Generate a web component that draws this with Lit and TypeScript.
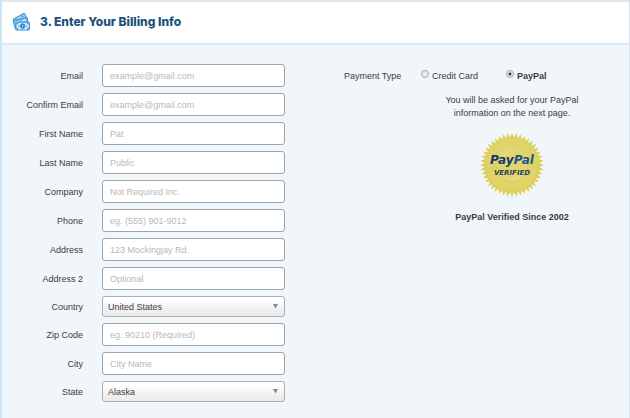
import { LitElement, html, svg, css } from "lit";
import { customElement, state } from "lit/decorators.js";

interface Field {
  id: string;
  label: string;
  placeholder?: string;
  type?: string;
  options?: string[];
}

const FIELDS: Field[] = [
  { id: "email", label: "Email", placeholder: "example@gmail.com", type: "email" },
  { id: "confirm", label: "Confirm Email", placeholder: "example@gmail.com", type: "email" },
  { id: "first", label: "First Name", placeholder: "Pat" },
  { id: "last", label: "Last Name", placeholder: "Public" },
  { id: "company", label: "Company", placeholder: "Not Required Inc." },
  { id: "phone", label: "Phone", placeholder: "eg. (555) 901-9012", type: "tel" },
  { id: "address", label: "Address", placeholder: "123 Mockingjay Rd." },
  { id: "address2", label: "Address 2", placeholder: "Optional" },
  { id: "country", label: "Country", options: ["United States"] },
  { id: "zip", label: "Zip Code", placeholder: "eg. 90210 (Required)" },
  { id: "city", label: "City", placeholder: "City Name" },
  { id: "state", label: "State", options: ["Alaska"] },
];

// Outline of the serrated seal: alternating outer and inner radii.
const TEETH = 44;
const sealPoints = Array.from({ length: TEETH * 2 }, (_, i) => {
  const r = i % 2 ? 27.2 : 32;
  const a = (Math.PI * i) / TEETH;
  return `${(32 + r * Math.sin(a)).toFixed(2)},${(32 - r * Math.cos(a)).toFixed(2)}`;
}).join(" ");

@customElement("verified-seal")
export class VerifiedSeal extends LitElement {
  static styles = css`
    :host { display: block; }
    .seal { display: block; width: 64px; height: 64px; }
    .brand { font: italic 700 12px "DejaVu Sans", sans-serif; }
    .dark { fill: #14386b; }
    .light { fill: #1c5590; }
    .word { font: italic 700 7px "DejaVu Sans", sans-serif; fill: #2b4257; }
  `;

  render() {
    return html`<svg class="seal" viewBox="0 0 64 64" role="img" aria-label="PayPal Verified">
      ${svg`
        <defs>
          <linearGradient id="disc" x1="0" y1="0" x2="0.6" y2="1">
            <stop offset="0" stop-color="#e9df86" />
            <stop offset="0.5" stop-color="#dfd368" />
            <stop offset="1" stop-color="#e6db7c" />
          </linearGradient>
        </defs>
        <polygon points=${sealPoints} fill="#decf5a" />
        <circle cx="32" cy="32" r="26" fill="#e0d468" />
        <circle cx="32" cy="33" r="16" fill="url(#disc)" stroke="#d6c95c" stroke-width="0.8" />
        <path d="M20 22A16 16 0 0 1 44 22" fill="none" stroke="#ece392" stroke-width="1" />
        <text class="brand" x="32" y="31" text-anchor="middle"><tspan class="dark">Pay</tspan><tspan class="light">Pal</tspan></text>
        <text class="word" x="32" y="42" text-anchor="middle">VERIFIED</text>
      `}
    </svg>`;
  }
}

@customElement("app-root")
export class AppRoot extends LitElement {
  @state() private payment = "paypal";

  static styles = css`
    :host {
      display: block;
      box-sizing: border-box;
      min-height: 100vh;
      border-left: 2px solid #cbe5f5;
      border-right: 1px solid #d3e6f2;
      background: #f0f6fa;
      color: #3d3d3d;
      font: 9px/13px "Liberation Sans", Arial, sans-serif;
    }
    * { box-sizing: border-box; }
    .head {
      display: flex;
      align-items: center;
      gap: 10px;
      height: 45px;
      padding: 0 10px 2px;
      border-top: 2px solid #dce9f3;
      border-bottom: 2px solid #dce8f2;
      background: #fff;
    }
    .icon { width: 18px; height: 18px; }
    .title {
      margin: 0;
      color: #1a527c;
      font: 800 12px/16px Inter, sans-serif;
    }
    .form {
      display: grid;
      grid-template-columns: 1fr 1fr;
      gap: 59px;
      padding: 19px 26px 12px 24px;
    }
    .fields { display: flex; flex-direction: column; gap: 6px; }
    .row {
      display: grid;
      grid-template-columns: 57px 1fr;
      column-gap: 19px;
      align-items: center;
    }
    .label { padding-top: 2px; text-align: right; white-space: nowrap; }
    .input, .select {
      display: block;
      width: 100%;
      margin: 0;
      border: 1px solid #9aa4ab;
      border-radius: 3px;
      color: #3d3d3d;
      font: inherit;
      outline: none;
    }
    .input { height: 23px; padding: 0 7px; background: #fff; }
    .input::placeholder { color: #b8b8b8; opacity: 1; }
    .pick { position: relative; }
    .select {
      height: 21px;
      padding: 2px 20px 0 5px;
      border-color: #aaafb3;
      background: linear-gradient(#fff 20%, #f4f4f4 50%, #ebebeb);
      appearance: none;
    }
    .arrow {
      position: absolute;
      top: 8px;
      right: 7px;
      width: 5px;
      height: 5px;
      pointer-events: none;
    }
    .payment {
      display: grid;
      grid-template-columns: 58px 1fr;
      column-gap: 19px;
      align-content: start;
      padding-top: 6px;
    }
    .choices { display: flex; gap: 28px; }
    .choice { display: flex; gap: 3px; white-space: nowrap; }
    .chosen { font-weight: 700; }
    .radio {
      width: 8px;
      height: 8px;
      margin: 0;
      border: 1px solid #a3a6a8;
      border-radius: 50%;
      background: #e9eaeb;
      appearance: none;
    }
    .radio:checked { background: radial-gradient(circle, #444 0 1px, #e9eaeb 2px); }
    .notice {
      grid-column: 2;
      display: flex;
      flex-direction: column;
      align-items: center;
      padding-top: 11px;
      text-align: center;
    }
    .text { max-width: 150px; margin: 0 0 13px; }
    .since { margin: 14px 0 0; font-weight: 700; white-space: nowrap; }
  `;

  private control(f: Field) {
    return f.options
      ? html`<div class="pick">
          <select class="select" id=${f.id}>${f.options.map((o) => html`<option>${o}</option>`)}</select>
          <svg class="arrow" viewBox="0 0 5 5" aria-hidden="true"><path d="M0 0H5L2.5 4.5Z" fill="#888" /></svg>
        </div>`
      : html`<input class="input" id=${f.id} type=${f.type ?? "text"} placeholder=${f.placeholder ?? ""} />`;
  }

  private choice(value: string, text: string) {
    const on = this.payment === value;
    return html`<label class="choice ${on ? "chosen" : ""}">
      <input class="radio" type="radio" name="payment" .value=${value} .checked=${on}
        @change=${() => (this.payment = value)} />${text}
    </label>`;
  }

  render() {
    return html`
      <header class="head">
        <svg class="icon" viewBox="0 0 18 18" aria-hidden="true">
          <g stroke="#3a93d6" stroke-width="1">
            <g transform="rotate(-29 8 6)">
              <rect x="1.5" y="3" width="13" height="7" rx="0.6" fill="#a5d2ef" />
              <path d="M3.5 5h2M10.5 5h2M3.5 7.5h8" />
            </g>
            <g transform="rotate(-15 9 9)">
              <rect x="1.8" y="6" width="14" height="8" rx="0.6" fill="#7abce6" />
              <path d="M3.5 8h3M11 8h3M4 10.5h3" stroke="#fff" />
            </g>
            <rect x="3.8" y="9.2" width="13.6" height="7.8" rx="0.6" fill="#d2e8f6" />
            <path d="M4 11h1.5V9.3M17.2 11h-1.5V9.3M4 15.2h1.5V17M17.2 15.2h-1.5V17" fill="none" />
            <circle cx="10.6" cy="13.1" r="2.3" fill="#2c83c3" />
            <path d="M10.6 11.8v2.6" stroke="#9fd0ee" />
            <path d="M6.3 13.1h1.2M13.7 13.1h1.2" />
          </g>
        </svg>
        <h1 class="title">3. Enter Your Billing Info</h1>
      </header>
      <form class="form" @submit=${(e: Event) => e.preventDefault()}>
        <div class="fields">
          ${FIELDS.map((f) => html`<div class="row"><label class="label" for=${f.id}>${f.label}</label>${this.control(f)}</div>`)}
        </div>
        <div class="payment" role="radiogroup" aria-labelledby="payment-type">
          <span id="payment-type">Payment Type</span>
          <div class="choices">
            ${this.choice("card", "Credit Card")} ${this.choice("paypal", "PayPal")}
          </div>
          <div class="notice">
            <p class="text">You will be asked for your PayPal information on the next page.</p>
            <verified-seal></verified-seal>
            <p class="since">PayPal Verified Since 2002</p>
          </div>
        </div>
      </form>
    `;
  }
}
